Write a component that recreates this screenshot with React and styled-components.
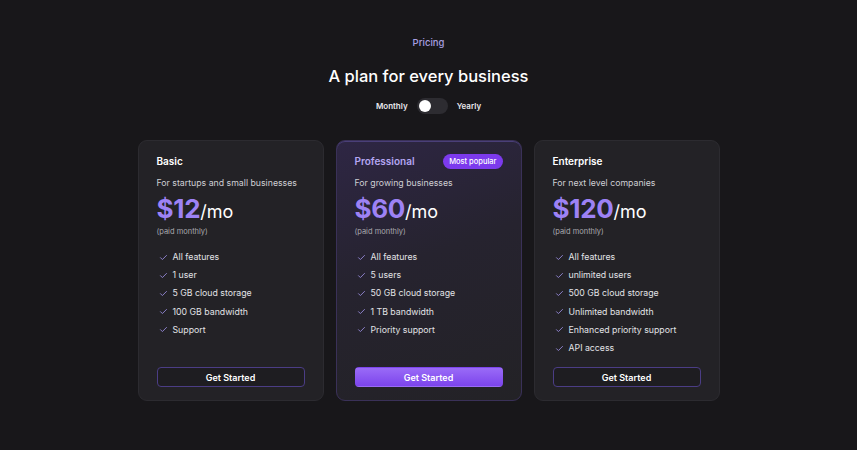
import styled, { createGlobalStyle } from 'styled-components';

const GlobalStyle = createGlobalStyle`
  html, body {
    margin: 0;
    background: #18171a;
  }
  body {
    font-family: Inter, "Noto Sans", sans-serif;
    color: #f4f4f6;
    -webkit-font-smoothing: antialiased;
  }
`;

const Page = styled.div`
  min-height: 450px;
  padding-top: 36px;
  box-sizing: border-box;
  display: flex;
  flex-direction: column;
  align-items: center;
`;

const Eyebrow = styled.div`
  font-size: 9.5px;
  line-height: 14px;
  color: #a79fe0;
  font-weight: 500;
`;

const Title = styled.h1`
  margin: 14px 0 0;
  font-size: 16.5px;
  line-height: 24px;
  font-weight: 500;
  color: #ffffff;
`;

const ToggleRow = styled.div`
  margin-top: 10px;
  height: 16px;
  display: flex;
  align-items: center;
  gap: 9px;
  font-size: 8px;
  font-weight: 600;
  color: #e8e8ec;
`;

const Switch = styled.div`
  width: 31px;
  height: 16px;
  border-radius: 8px;
  background: #2d2c31;
  display: flex;
  align-items: center;
  padding: 0 2px;
  box-sizing: border-box;
  justify-content: ${p => (p.on ? 'flex-end' : 'flex-start')};
`;

const Knob = styled.div`
  width: 12px;
  height: 12px;
  border-radius: 50%;
  background: #ffffff;
`;

const Grid = styled.div`
  margin-top: 26px;
  display: grid;
  grid-template-columns: repeat(3, 186px);
  gap: 12px;
`;

const Card = styled.div`
  display: flex;
  flex-direction: column;
  padding: 12px 18px 13px;
  border-radius: 9px;
  border: 1px solid ${p => (p.featured ? '#3a3158' : '#2c2b30')};
  background: ${p =>
    p.featured
      ? 'linear-gradient(160deg, #2e2644 0%, #26232f 45%, #232226 100%)'
      : '#232226'};
  box-shadow: ${p => (p.featured ? 'inset 0 1px 0 #4a3f78' : 'none')};
`;

const Head = styled.div`
  height: 16px;
  display: flex;
  align-items: center;
  justify-content: space-between;
`;

const PlanName = styled.div`
  font-size: 10px;
  font-weight: 600;
  color: ${p => (p.featured ? '#b4a6f2' : '#ffffff')};
`;

const Badge = styled.div`
  height: 15px;
  padding: 0 6px;
  border-radius: 8px;
  background: #7c3aed;
  color: #ffffff;
  font-size: 7.5px;
  font-weight: 500;
  display: flex;
  align-items: center;
`;

const Desc = styled.div`
  margin-top: 7px;
  font-size: 8.75px;
  line-height: 14px;
  color: #cfcfd4;
`;

const Price = styled.div`
  margin-top: 4px;
  line-height: 30px;
  display: flex;
  align-items: baseline;
`;

const Amount = styled.span`
  font-size: 26px;
  font-weight: 700;
  color: #9d82f5;
  letter-spacing: -0.3px;
`;

const Per = styled.span`
  font-size: 18px;
  font-weight: 400;
  color: #ffffff;
`;

const Note = styled.div`
  font-size: 7.5px;
  line-height: 10px;
  color: #a9a9ae;
`;

const Features = styled.ul`
  list-style: none;
  margin: 11px 0 0;
  padding: 0;
`;

const Feature = styled.li`
  display: flex;
  align-items: center;
  gap: 5px;
  height: 18.2px;
  font-size: 8.75px;
  color: #e2e2e6;
  padding-left: 2px;
`;

const Button = styled.button`
  margin-top: auto;
  height: 20px;
  width: 100%;
  border-radius: 4px;
  font-family: inherit;
  font-size: 9px;
  font-weight: 600;
  color: #ffffff;
  cursor: pointer;
  border: 1px solid ${p => (p.primary ? 'transparent' : '#4b3d85')};
  background: ${p =>
    p.primary ? 'linear-gradient(180deg, #9a6bf7 0%, #7c44ec 100%)' : '#1e1d21'};
`;

const Spacer = styled.div`
  height: 10px;
  flex-shrink: 0;
`;

const Check = () => (
  <svg width="9" height="9" viewBox="0 0 24 24" fill="none" stroke="#8d82cc" strokeWidth="2.6" strokeLinecap="round" strokeLinejoin="round">
    <path d="M4 12.5l5 5L20 6.5" />
  </svg>
);

const plans = [
  {
    name: 'Basic',
    desc: 'For startups and small businesses',
    price: '$12',
    features: ['All features', '1 user', '5 GB cloud storage', '100 GB bandwidth', 'Support'],
  },
  {
    name: 'Professional',
    desc: 'For growing businesses',
    price: '$60',
    featured: true,
    features: ['All features', '5 users', '50 GB cloud storage', '1 TB bandwidth', 'Priority support'],
  },
  {
    name: 'Enterprise',
    desc: 'For next level companies',
    price: '$120',
    features: ['All features', 'unlimited users', '500 GB cloud storage', 'Unlimited bandwidth', 'Enhanced priority support', 'API access'],
  },
];

export default function App() {
  return (
    <>
      <GlobalStyle />
      <Page>
        <Eyebrow>Pricing</Eyebrow>
        <Title>A plan for every business</Title>
        <ToggleRow>
          <span>Monthly</span>
          <Switch>
            <Knob />
          </Switch>
          <span>Yearly</span>
        </ToggleRow>
        <Grid>
          {plans.map(plan => (
            <Card key={plan.name} featured={plan.featured}>
              <Head>
                <PlanName featured={plan.featured}>{plan.name}</PlanName>
                {plan.featured && <Badge>Most popular</Badge>}
              </Head>
              <Desc>{plan.desc}</Desc>
              <Price>
                <Amount>{plan.price}</Amount>
                <Per>/mo</Per>
              </Price>
              <Note>(paid monthly)</Note>
              <Features>
                {plan.features.map(f => (
                  <Feature key={f}>
                    <Check />
                    {f}
                  </Feature>
                ))}
              </Features>
              <Spacer />
              <Button primary={plan.featured}>Get Started</Button>
            </Card>
          ))}
        </Grid>
      </Page>
    </>
  );
}
